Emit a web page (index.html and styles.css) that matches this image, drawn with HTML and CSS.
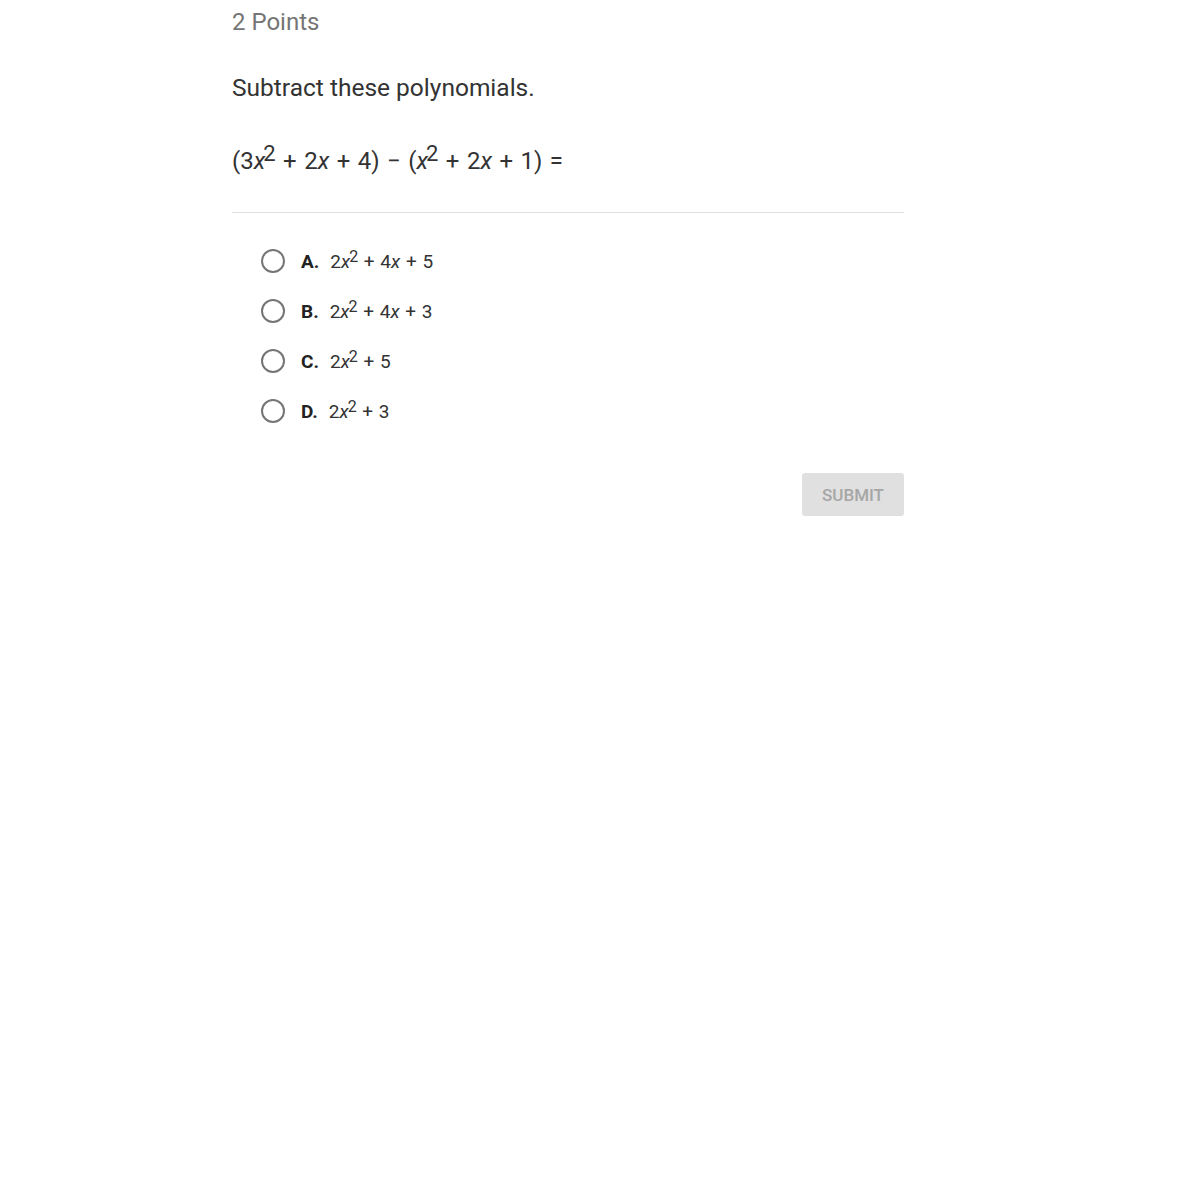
FILE: index.html
```html
<!DOCTYPE html>
<html>
<head>
<meta charset="utf-8">
<link rel="stylesheet" href="styles.css">
</head>
<body>
<div class="quiz">
  <div class="points">2 Points</div>
  <div class="prompt">Subtract these polynomials.</div>
  <div class="equation">(3<i>x</i><sup>2</sup> + 2<i>x</i> + 4) − (<i>x</i><sup>2</sup> + 2<i>x</i> + 1) =</div>
  <div class="divider"></div>
  <ul class="choices">
    <li class="choice"><span class="radio"></span><b class="letter">A.</b><span class="ans">2<i>x</i><sup>2</sup> + 4<i>x</i> + 5</span></li>
    <li class="choice"><span class="radio"></span><b class="letter">B.</b><span class="ans">2<i>x</i><sup>2</sup> + 4<i>x</i> + 3</span></li>
    <li class="choice"><span class="radio"></span><b class="letter">C.</b><span class="ans">2<i>x</i><sup>2</sup> + 5</span></li>
    <li class="choice"><span class="radio"></span><b class="letter">D.</b><span class="ans">2<i>x</i><sup>2</sup> + 3</span></li>
  </ul>
  <div class="actions"><button class="submit">SUBMIT</button></div>
</div>
</body>
</html>
```
FILE: styles.css
```css
html, body {
  margin: 0;
  padding: 0;
  background: #fff;
  font-family: Roboto, "Liberation Sans", sans-serif;
}
.quiz {
  width: 672px;
  margin-left: 232px;
}
.points {
  font-size: 24px;
  color: #757575;
  line-height: 28px;
  padding-top: 8px;
}
.prompt {
  font-size: 24.5px;
  color: #333;
  line-height: 30px;
  margin-top: 37px;
}
.equation {
  font-size: 24px;
  color: #333;
  line-height: 32px;
  margin-top: 42px;
  word-spacing: 1.5px;
}
.equation i, .ans i {
  font-style: italic;
}
.equation sup {
  font-size: 22px;
  vertical-align: 8px;
  line-height: 0;
  margin-left: -2px;
}
.divider {
  height: 1px;
  background: #e0e0e0;
  margin-top: 35px;
}
.choices {
  list-style: none;
  margin: 23px 0 0 0;
  padding: 0 0 0 29px;
}
.choice {
  display: flex;
  align-items: center;
  height: 50px;
  font-size: 19px;
  color: #333;
}
.ans {
  word-spacing: 1px;
}
.radio {
  width: 20px;
  height: 20px;
  border: 2px solid #757575;
  border-radius: 50%;
  flex: none;
  margin-right: 16px;
}
.letter {
  font-weight: 700;
  margin-right: 11px;
  word-spacing: 0;
  color: #222;
}
.ans sup {
  font-size: 16px;
  vertical-align: 6px;
  line-height: 0;
  margin-left: -1px;
}
.actions {
  display: flex;
  justify-content: flex-end;
  margin-top: 37px;
}
.submit {
  width: 102px;
  height: 43px;
  border: none;
  border-radius: 3px;
  background: #e0e0e0;
  color: #a6a6a6;
  font-family: Roboto, "Liberation Sans", sans-serif;
  font-size: 17px;
  font-weight: 500;
  padding: 0;
}
```
